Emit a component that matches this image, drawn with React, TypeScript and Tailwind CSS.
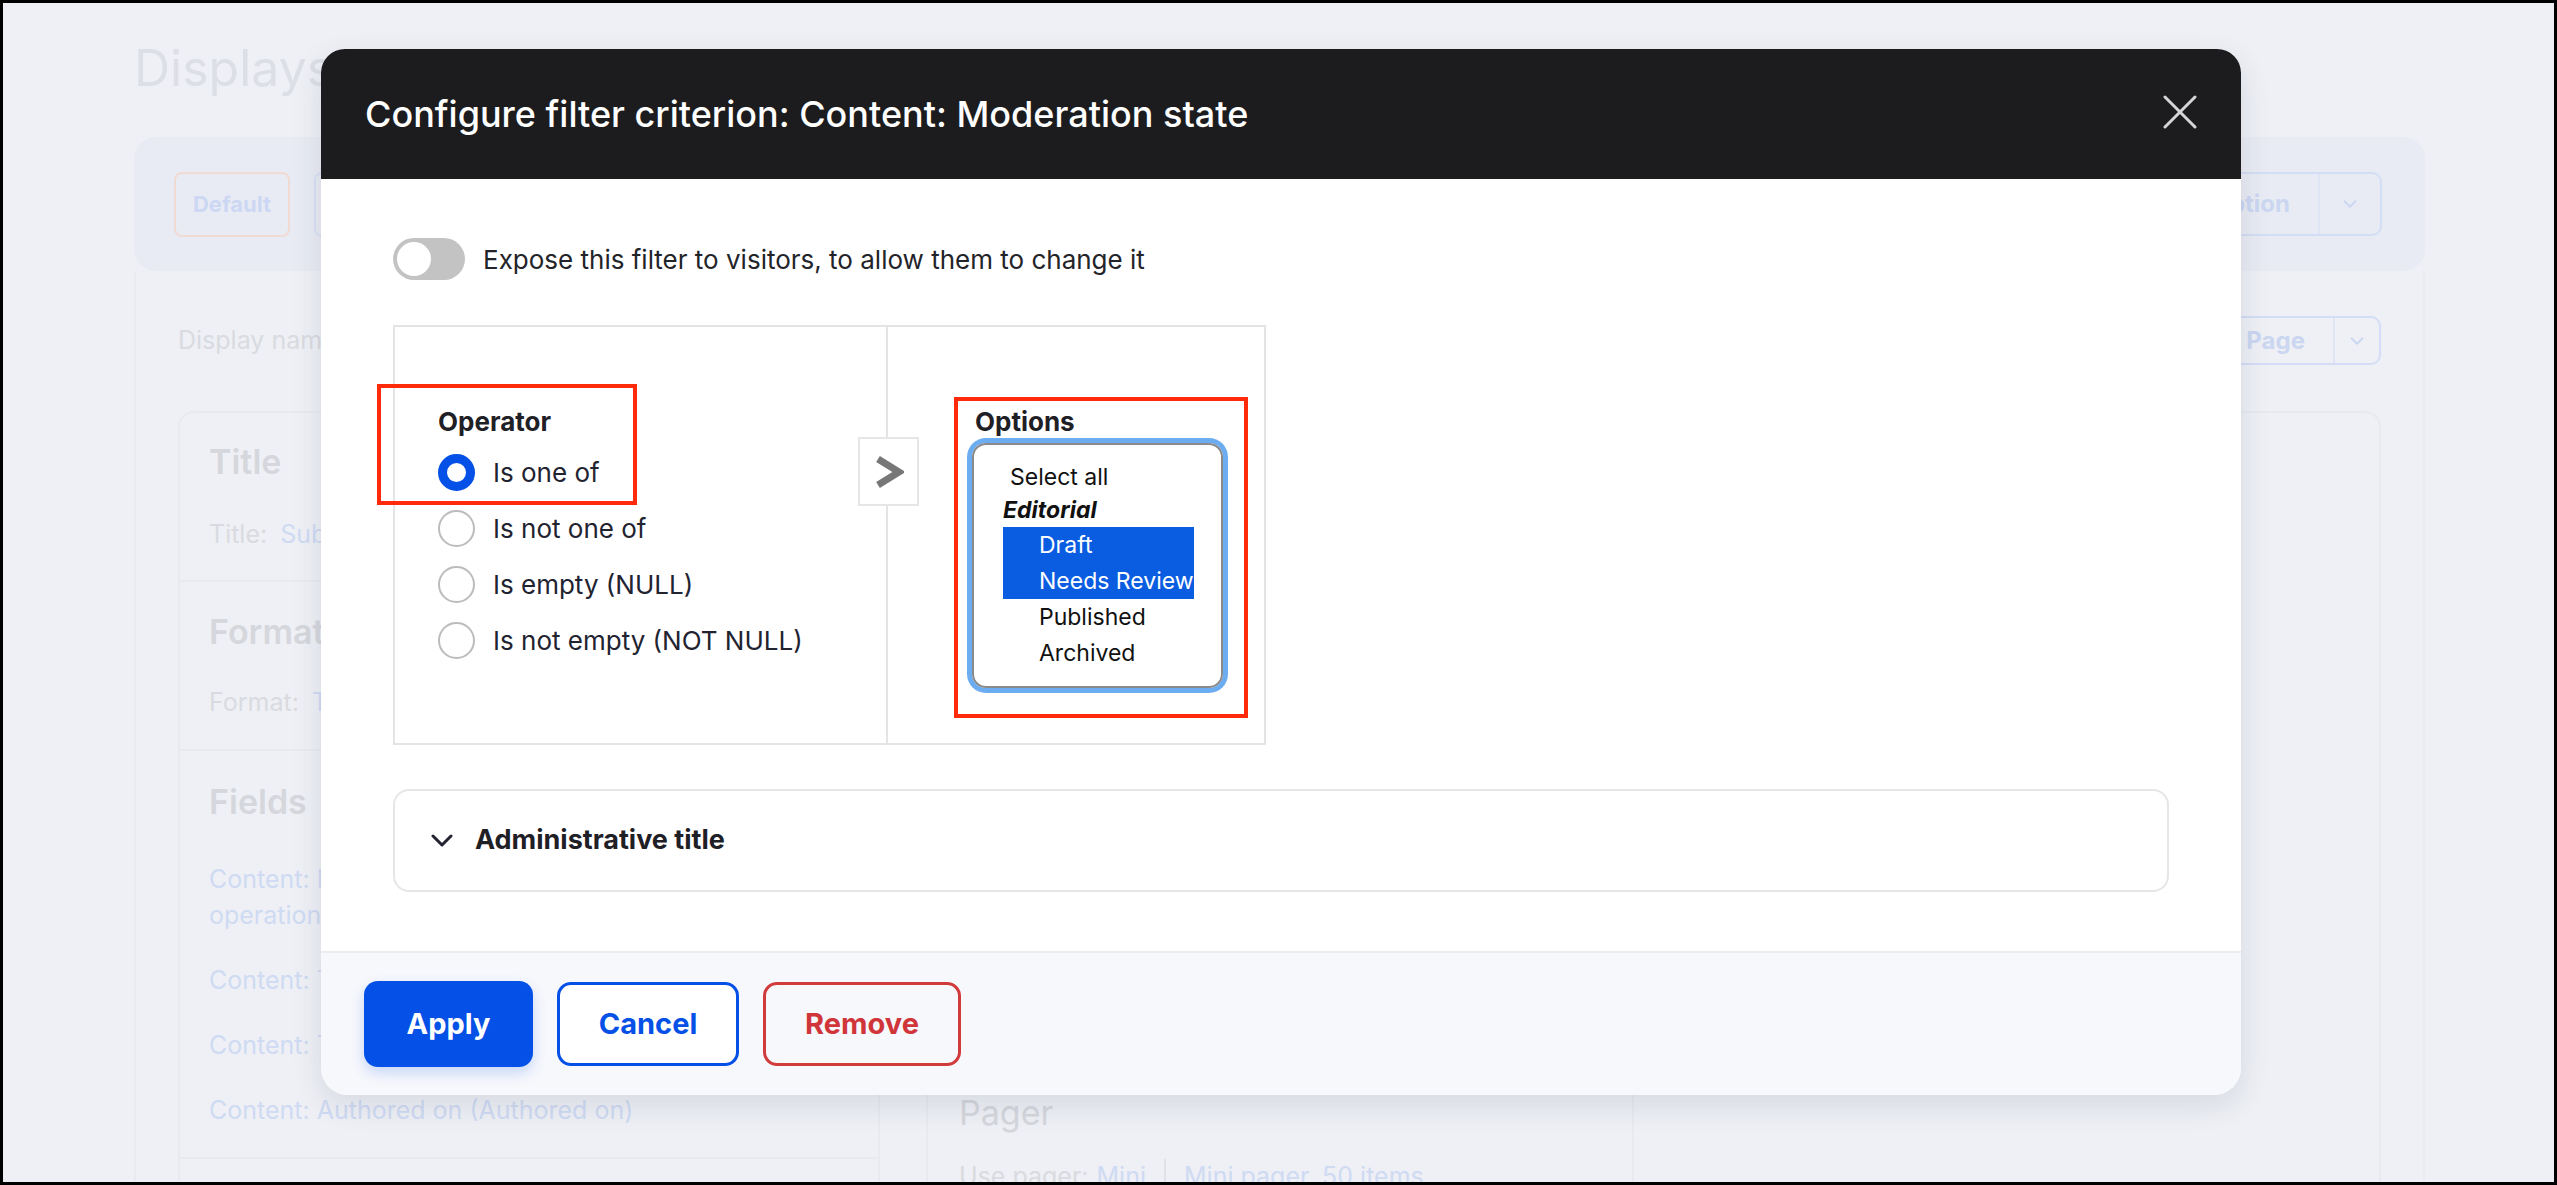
import { ChevronDown } from "lucide-react";

function GhostPage() {
  return (
    <div className="pl-[131px] pr-[129px] pt-[36px] font-['Inter',sans-serif]">
      <h1 className="text-[50px] leading-[58px] text-[#dcdfe5]">Displays</h1>

      <div className="mt-[40px] flex h-[134px] items-center justify-between rounded-[22px] bg-[#e8ebf3] pl-[40px] pr-[43px]">
        <div className="flex gap-[24px]">
          <div className="flex h-[65px] w-[116px] items-center justify-center rounded-[8px] border-2 border-[#f1dad3] text-[22px] font-bold text-[#ccd8f3]">
            Default
          </div>
          <div className="flex h-[65px] w-[150px] items-center justify-center rounded-[8px] border-2 border-[#d9e1f4] text-[22px] font-bold text-[#ccd8f3]">
            Page
          </div>
        </div>
        <div className="flex h-[64px] items-center rounded-[10px] border-2 border-[#d3ddf5] text-[24px] font-bold text-[#cbd6f1]">
          <span className="pl-[28px] pr-[28px]">Add option</span>
          <span className="flex h-full w-[62px] items-center justify-center border-l-2 border-[#dfe5f5]">
            <ChevronDown className="h-[22px] w-[22px]" strokeWidth={2} />
          </span>
        </div>
      </div>

      <div className="border-x-2 border-[#e9ebf0] px-[42px]">
        <div className="flex items-center justify-between pt-[45px]">
          <span className="text-[25px] text-[#d9dbe1]">Display name: Page</span>
          <div className="flex h-[49px] items-center rounded-[10px] border-2 border-[#d3ddf5] text-[24px] font-bold text-[#cbd6f1]">
            <span className="pl-[24px] pr-[28px]">Duplicate Page</span>
            <span className="flex h-full w-[46px] items-center justify-center border-l-2 border-[#dfe5f5]">
              <ChevronDown className="h-[22px] w-[22px]" strokeWidth={2} />
            </span>
          </div>
        </div>

        <div className="mt-[46px] flex gap-[46px]">
          <div className="w-[702px] rounded-t-[16px] border-2 border-[#e8eaef]">
            <div className="border-b-2 border-[#e8eaef] px-[29px] pb-[29px] pt-[29px]">
              <div className="text-[34px] font-semibold leading-[40px] text-[#d5d7dc]">Title</div>
              <div className="mt-[35px] text-[25px] leading-[34px] text-[#d9dbe0]">
                Title: <span className="ml-[6px] text-[#cfdaf3]">Subscribed content</span>
              </div>
            </div>
            <div className="border-b-2 border-[#e8eaef] px-[29px] pb-[30px] pt-[30px]">
              <div className="text-[34px] font-semibold leading-[40px] text-[#d5d7dc]">Format</div>
              <div className="mt-[33px] text-[25px] leading-[34px] text-[#d9dbe0]">
                Format: <span className="ml-[6px] text-[#cfdaf3]">Table</span>
              </div>
            </div>
            <div className="border-b-2 border-[#e8eaef] px-[29px] pb-[29px] pt-[31px]">
              <div className="text-[34px] font-semibold leading-[40px] text-[#d5d7dc]">Fields</div>
              <div className="mt-[39px] flex flex-col gap-[29px] text-[25px] leading-[36px] text-[#cfdaf3]">
                <div>
                  <span className="block">Content: Moderation control</span>
                  <span className="block">operations</span>
                </div>
                <div>Content: Title</div>
                <div>Content: Type</div>
                <div>Content: Authored on (Authored on)</div>
              </div>
            </div>
          </div>

          <div className="flex flex-1 rounded-t-[16px] border-2 border-[#e8eaef]">
            <div className="w-[706px] border-r-2 border-[#e8eaef] px-[31px]">
              <div className="pt-[680px] text-[34px] leading-[40px] text-[#d5d7dc]">Pager</div>
              <div className="mt-[26px] flex items-center whitespace-nowrap text-[25px] leading-[34px] text-[#d9dbe0]">
                Use pager:
                <span className="ml-[8px] text-[#cfdaf3]">Mini</span>
                <span className="mx-[18px] h-[34px] w-[2px] bg-[#dfe1e6]" />
                <span className="text-[#cfdaf3]">Mini pager, 50 items</span>
              </div>
            </div>
            <div className="flex-1" />
          </div>
        </div>
      </div>
    </div>
  );
}

function Radio({ label, checked }: { label: string; checked?: boolean }) {
  return (
    <div className="flex h-[36px] items-center gap-[18px]">
      {checked ? (
        <span className="h-[37px] w-[37px] rounded-full border-[9px] border-[#0550e6] bg-white" />
      ) : (
        <span className="h-[37px] w-[37px] rounded-full border-2 border-[#bcbcbc] bg-white" />
      )}
      <span className="text-[26px] text-[#222330]">{label}</span>
    </div>
  );
}

function Dialog() {
  return (
    <div className="absolute left-[318px] top-[46px] flex w-[1920px] flex-col overflow-hidden rounded-[24px] rounded-b-[27px] bg-white shadow-[0_10px_30px_rgba(40,50,80,0.12)]">
      <div className="flex h-[130px] items-center justify-between bg-[#1c1c1e] px-[44px]">
        <h2 className="text-[36px] font-medium text-white">
          Configure filter criterion: Content: Moderation state
        </h2>
        <svg width="34" height="34" viewBox="0 0 34 34" className="mt-[-4px]">
          <path d="M2 2 L32 32 M32 2 L2 32" stroke="#d6d6d6" strokeWidth="3" strokeLinecap="round" />
        </svg>
      </div>

      <div className="px-[72px] pb-[59px] pt-[58px]">
        <div className="flex h-[44px] items-center gap-[18px]">
          <span className="flex h-[42px] w-[72px] items-center rounded-full bg-[#c3c3c3] pl-[4px]">
            <span className="h-[34px] w-[34px] rounded-full bg-white" />
          </span>
          <span className="text-[26px] text-[#232429]">
            Expose this filter to visitors, to allow them to change it
          </span>
        </div>

        <div className="relative mt-[44px] flex h-[420px] w-[873px] border-2 border-[#e4e4e4]">
          <div className="w-[493px] border-r-2 border-[#e4e4e4] pl-[43px] pt-[80px]">
            <div className="text-[26px] font-bold leading-[30px] text-[#1f2026]">Operator</div>
            <div className="mt-[17px] flex flex-col gap-[20px]">
              <Radio label="Is one of" checked />
              <Radio label="Is not one of" />
              <Radio label="Is empty (NULL)" />
              <Radio label="Is not empty (NOT NULL)" />
            </div>
          </div>

          <div className="flex-1 pl-[84px] pt-[80px]">
            <div className="pl-[3px] text-[26px] font-bold leading-[30px] text-[#1f2026]">Options</div>
            <div className="mt-[6px] h-[245px] w-[251px] rounded-[14px] border-2 border-[#8a8a8a] pl-[29px] pt-[16px] text-[23px] text-[#111] ring-[5px] ring-[#6cadf2]">
              <div className="flex h-[33px] items-center pl-[7px]">Select all</div>
              <div className="flex h-[33px] items-center font-bold italic">Editorial</div>
              <div className="w-[191px] overflow-hidden whitespace-nowrap bg-[#0a5ce0] text-white">
                <div className="flex h-[36px] items-center pl-[36px]">Draft</div>
                <div className="flex h-[36px] items-center pl-[36px]">Needs Review</div>
              </div>
              <div className="flex h-[36px] items-center pl-[36px]">Published</div>
              <div className="flex h-[36px] items-center pl-[36px]">Archived</div>
            </div>
          </div>

          <div className="absolute left-[463px] top-[110px] flex h-[69px] w-[61px] items-center justify-center border-2 border-[#e6e6e6] bg-white">
            <svg width="30" height="34" viewBox="0 0 30 34">
              <path d="M4 4 L25 17 L4 30" fill="none" stroke="#777" strokeWidth="7" strokeLinejoin="miter" />
            </svg>
          </div>

          <div className="absolute left-[-18px] top-[57px] h-[121px] w-[260px] border-4 border-[#ff2a0a]" />
          <div className="absolute left-[559px] top-[70px] h-[321px] w-[294px] border-4 border-[#ff2a0a]" />
        </div>

        <div className="mt-[44px] flex h-[103px] items-center gap-[22px] rounded-[16px] border-2 border-[#e6e6e6] pl-[36px]">
          <svg width="22" height="13" viewBox="0 0 22 13">
            <path d="M2 2 L11 11 L20 2" fill="none" stroke="#222330" strokeWidth="3" strokeLinecap="round" strokeLinejoin="round" />
          </svg>
          <span className="text-[27px] font-bold text-[#1f2026]">Administrative title</span>
        </div>
      </div>

      <div className="flex h-[144px] items-center gap-[24px] border-t-2 border-[#ececf0] bg-[#f7f8fc] px-[43px]">
        <button className="h-[86px] w-[169px] rounded-[14px] bg-[#0550e6] text-[29px] font-bold text-white shadow-[0_6px_14px_rgba(5,80,230,0.2)]">
          Apply
        </button>
        <button className="h-[84px] w-[182px] rounded-[14px] border-[3px] border-[#0550e6] bg-white text-[29px] font-bold text-[#0550e6]">
          Cancel
        </button>
        <button className="h-[84px] w-[198px] rounded-[14px] border-[3px] border-[#d23b3b] bg-transparent text-[29px] font-bold text-[#d0353a]">
          Remove
        </button>
      </div>
    </div>
  );
}

export default function App() {
  return (
    <div className="relative h-[1185px] w-[2557px] overflow-hidden border-[3px] border-black bg-[#eef0f5] font-['Inter',sans-serif]">
      <GhostPage />
      <Dialog />
    </div>
  );
}
